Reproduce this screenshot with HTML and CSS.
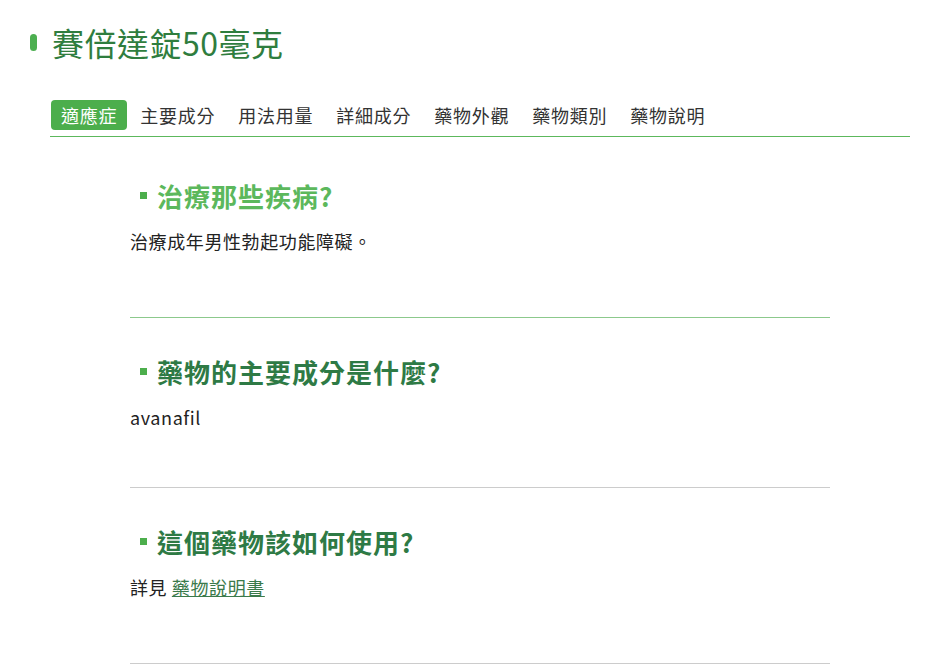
FILE: index.html
```html
<!DOCTYPE html>
<html lang="zh-Hant">
<head>
<meta charset="utf-8">
<title>賽倍達錠50毫克</title>
<link rel="stylesheet" href="styles.css">
</head>
<body>
<div class="page">
  <h1 class="title"><span class="pill"></span><span class="title-text">賽倍達錠50毫克</span></h1>
  <nav class="tabs">
    <a class="tab active">適應症</a>
    <a class="tab">主要成分</a>
    <a class="tab">用法用量</a>
    <a class="tab">詳細成分</a>
    <a class="tab">藥物外觀</a>
    <a class="tab">藥物類別</a>
    <a class="tab">藥物說明</a>
  </nav>
  <main class="content">
    <section class="qa first">
      <h2 class="q light"><span class="sq"></span>治療那些疾病?</h2>
      <p class="a">治療成年男性勃起功能障礙。</p>
    </section>
    <section class="qa">
      <h2 class="q"><span class="sq"></span>藥物的主要成分是什麼?</h2>
      <p class="a">avanafil</p>
    </section>
    <section class="qa last">
      <h2 class="q"><span class="sq"></span>這個藥物該如何使用?</h2>
      <p class="a">詳見 <a class="link">藥物說明書</a></p>
    </section>
  </main>
</div>
</body>
</html>
```
FILE: styles.css
```css
* { box-sizing: border-box; }
html, body { margin: 0; padding: 0; background: #fff; }
body {
  font-family: "Noto Sans CJK TC", "Noto Sans", sans-serif;
  color: #222;
}
.page { padding: 22px 26px 0 30px; }
.title {
  display: flex;
  align-items: center;
  margin: 0;
  height: 40px;
  font-size: 32px;
  font-weight: 400;
  letter-spacing: 0.5px;
  color: #2f7d3e;
}
.pill {
  width: 7px;
  height: 17px;
  border-radius: 4px;
  background: #4caf50;
  margin-right: 15px;
}
.tabs {
  display: flex;
  gap: 3px;
  margin: 38px 0 0 20px;
  padding-bottom: 6px;
  border-bottom: 1px solid #5cb85c;
}
.tab {
  display: block;
  height: 30px;
  line-height: 30px;
  padding: 0 10px;
  font-size: 18px;
  letter-spacing: 0.75px;
  color: #333;
  border-radius: 4px;
}
.tabs .tab:first-child { margin-left: 1px; }
.tab.active { background: #4cae4c; color: #fff; }
.content { width: 700px; margin: 5px 0 0 100px; }
.qa {
  padding: 35px 0 56px;
  border-bottom: 1px solid #ccc;
}
.qa.first { padding-bottom: 62px; border-bottom-color: #8cc98c; }
.qa.last { padding-bottom: 62px; }
.q {
  display: flex;
  align-items: center;
  margin: 0 0 14px 10px;
  height: 36px;
  font-size: 26px;
  font-weight: 700;
  letter-spacing: 1px;
  color: #2e7a45;
}
.q.light { color: #5cb85c; }
.sq {
  width: 7px;
  height: 7px;
  background: #4cae4c;
  margin-right: 10px;
}
.a {
  margin: 0;
  height: 28px;
  line-height: 28px;
  font-size: 18px;
  letter-spacing: 0.6px;
  color: #222;
}
.link { color: #3b7a4a; text-decoration: underline; }
```
